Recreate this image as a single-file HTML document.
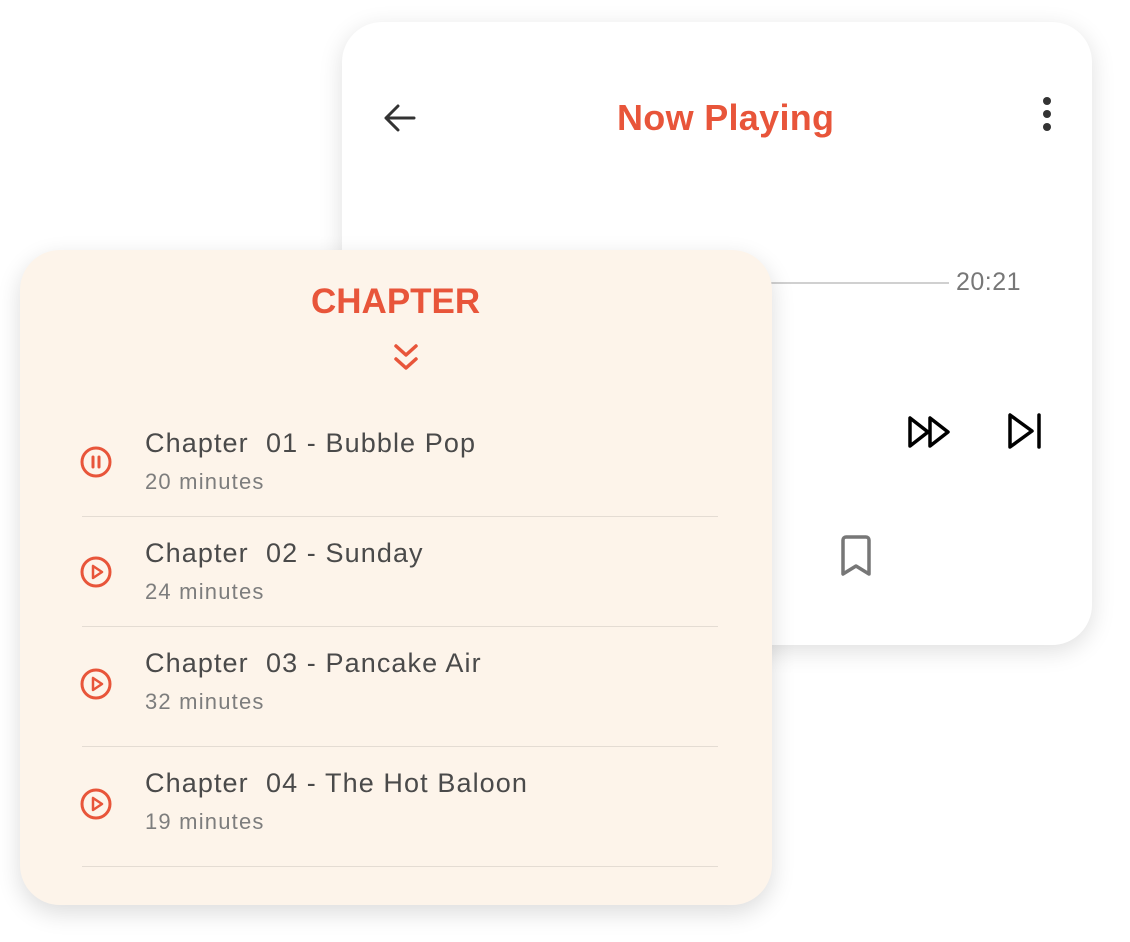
<!DOCTYPE html>
<html><head><style>
body{margin:0;width:1130px;height:942px;background:#fff;position:relative;overflow:hidden;font-family:"Liberation Sans",sans-serif}
.back{position:absolute;left:342px;top:22px;width:750px;height:623px;background:#fff;border-radius:40px;box-shadow:0 6px 24px rgba(0,0,0,.13)}
.front{position:absolute;left:20px;top:250px;width:752px;height:655px;background:#fdf4ea;border-radius:40px;box-shadow:0 8px 24px rgba(0,0,0,.14)}
.t{position:absolute;color:#e8553a;font-weight:bold;white-space:nowrap}
.row{position:absolute;left:62px;width:636px;height:110px;border-bottom:1px solid #e4dcd3}
.row .n{position:absolute;left:63px;font-size:27px;letter-spacing:1.1px;color:#4a4a4a;white-space:nowrap}
.row .m{position:absolute;left:63px;font-size:22px;letter-spacing:1.2px;color:#7d7d7d}
.row svg{position:absolute;left:-4px}
</style></head><body>
<div class="back">
 <svg style="position:absolute;left:38px;top:76px" width="40" height="40" viewBox="0 0 40 40"><path d="M34 20H6M18 8L6 20l12 12" stroke="#333" stroke-width="3" fill="none" stroke-linecap="round" stroke-linejoin="round"/></svg>
 <div class="t" style="left:275px;top:75px;font-size:36px;letter-spacing:0.3px">Now Playing</div>
 <svg style="position:absolute;left:698px;top:74px" width="14" height="38"><circle cx="7" cy="5" r="4" fill="#333"/><circle cx="7" cy="18" r="4" fill="#333"/><circle cx="7" cy="31" r="4" fill="#333"/></svg>
 <div style="position:absolute;left:400px;top:260px;width:207px;height:2px;background:#d0d0d0"></div>
 <div style="position:absolute;left:614px;top:246px;font-size:25px;color:#777;letter-spacing:0.5px">20:21</div>
 <svg style="position:absolute;left:564px;top:390px" width="48" height="40" viewBox="0 0 48 40"><path d="M4 6v28l18-14zM24 6v28l18-14z" stroke="#000" stroke-width="3.5" fill="none" stroke-linejoin="round"/></svg>
 <svg style="position:absolute;left:664px;top:388px" width="40" height="42" viewBox="0 0 40 42"><path d="M4 5v32l22-16z" stroke="#000" stroke-width="3.5" fill="none" stroke-linejoin="round"/><path d="M33 5v32" stroke="#000" stroke-width="3.5" stroke-linecap="round"/></svg>
 <svg style="position:absolute;left:498px;top:513px" width="36" height="44" viewBox="0 0 36 44"><path d="M3 5a3 3 0 0 1 3-3h20a3 3 0 0 1 3 3v34l-13-8-13 8z" stroke="#777" stroke-width="3.5" fill="none" stroke-linejoin="round"/></svg>
</div>
<div class="front">
 <div class="t" style="left:291px;top:32px;font-size:35px">CHAPTER</div>
 <svg style="position:absolute;left:372px;top:92px" width="28" height="32" viewBox="0 0 28 32"><path d="M4 4l10 9 10-9M4 17l10 9 10-9" stroke="#e8553a" stroke-width="3.5" fill="none" stroke-linecap="round" stroke-linejoin="round"/></svg>
 <div class="row" style="top:156px"><svg style="top:38px" width="36" height="36" viewBox="0 0 36 36"><circle cx="18" cy="18" r="14" stroke="#e8553a" stroke-width="3" fill="none"/><path d="M15 13v10M21 13v10" stroke="#e8553a" stroke-width="3" stroke-linecap="round"/></svg><div class="n" style="top:22px">Chapter&nbsp; 01 - Bubble Pop</div><div class="m" style="top:63px">20 minutes</div></div>
 <div class="row" style="top:266px"><svg style="top:38px" width="36" height="36" viewBox="0 0 36 36"><circle cx="18" cy="18" r="14" stroke="#e8553a" stroke-width="3" fill="none"/><path d="M15 12v12l9-6z" stroke="#e8553a" stroke-width="2.5" fill="none" stroke-linejoin="round"/></svg><div class="n" style="top:22px">Chapter&nbsp; 02 - Sunday</div><div class="m" style="top:63px">24 minutes</div></div>
 <div class="row" style="top:376px;height:120px"><svg style="top:40px" width="36" height="36" viewBox="0 0 36 36"><circle cx="18" cy="18" r="14" stroke="#e8553a" stroke-width="3" fill="none"/><path d="M15 12v12l9-6z" stroke="#e8553a" stroke-width="2.5" fill="none" stroke-linejoin="round"/></svg><div class="n" style="top:22px">Chapter&nbsp; 03 - Pancake Air</div><div class="m" style="top:63px">32 minutes</div></div>
 <div class="row" style="top:496px;height:120px"><svg style="top:40px" width="36" height="36" viewBox="0 0 36 36"><circle cx="18" cy="18" r="14" stroke="#e8553a" stroke-width="3" fill="none"/><path d="M15 12v12l9-6z" stroke="#e8553a" stroke-width="2.5" fill="none" stroke-linejoin="round"/></svg><div class="n" style="top:22px">Chapter&nbsp; 04 - The Hot Baloon</div><div class="m" style="top:63px">19 minutes</div></div>
</div>
</body></html>
